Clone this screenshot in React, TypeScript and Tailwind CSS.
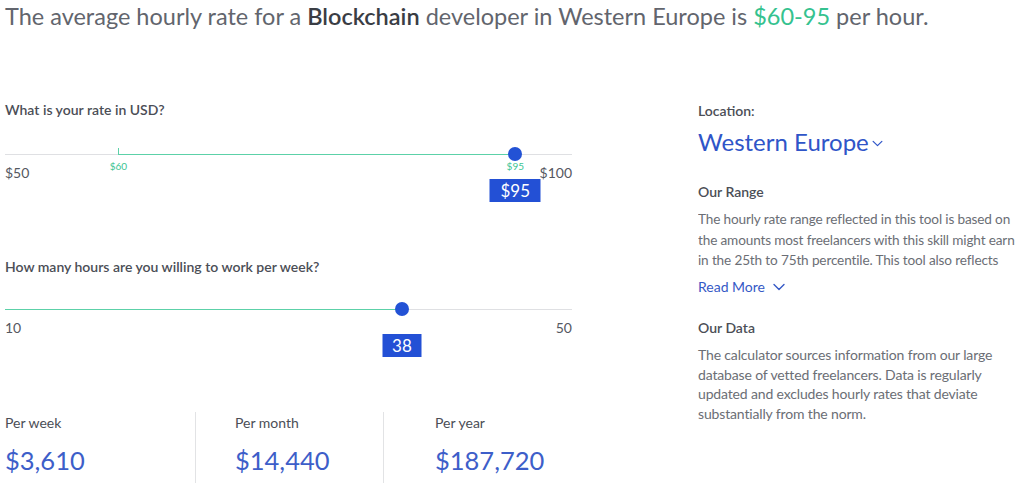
import type { ReactNode } from 'react'

const FONT = { fontFamily: 'Lato, "Open Sans", Arial, sans-serif' }

function pct(value: number, min: number, max: number) {
  return ((value - min) / (max - min)) * 100
}

function Chevron({ className }: { className: string }) {
  return (
    <svg viewBox="0 0 12 8" fill="none" className={className}>
      <path d="M1 1.5l5 5 5-5" stroke="currentColor" strokeWidth="1.4" strokeLinecap="round" strokeLinejoin="round" />
    </svg>
  )
}

function Label({ children }: { children: ReactNode }) {
  return <div className="text-[14px] leading-5 font-semibold text-[#4b4e56]">{children}</div>
}

interface SliderProps {
  min: number
  max: number
  value: number
  minLabel: string
  maxLabel: string
  badge: string
  badgeWidth: string
  range?: [number, number]
}

function Slider({ min, max, value, minLabel, maxLabel, badge, badgeWidth, range }: SliderProps) {
  const from = range ? pct(range[0], min, max) : 0
  const to = pct(value, min, max)
  return (
    <div className="flex flex-col">
      <div className="relative h-4">
        <div className="absolute left-0 right-0 top-[8px] h-px bg-[#dfe0e3]" />
        <div className="absolute top-[7.5px] h-[1.5px] bg-[#5cd1a8]" style={{ left: `${from}%`, width: `${to - from}%` }} />
        {range && (
          <>
            <div className="absolute top-[2px] h-[7px] w-px bg-[#5cd1a8]" style={{ left: `${from}%` }} />
            <div
              className="absolute top-[14px] -translate-x-1/2 text-[10px] leading-3 text-[#3cc493]"
              style={{ left: `${from}%` }}
            >
              ${range[0]}
            </div>
            <div
              className="absolute top-[14px] -translate-x-1/2 text-[10px] leading-3 text-[#3cc493]"
              style={{ left: `${pct(range[1], min, max)}%` }}
            >
              ${range[1]}
            </div>
          </>
        )}
        <div
          className="absolute top-[1px] h-[14px] w-[14px] -translate-x-1/2 rounded-full bg-[#2352d5]"
          style={{ left: `${to}%` }}
        />
      </div>
      <div className="flex justify-between pt-px text-[14px] leading-5 text-[#55585f]">
        <span>{minLabel}</span>
        <span>{maxLabel}</span>
      </div>
      <div className="relative -mt-[4px] h-[25px]">
        <div
          className={`absolute top-0 flex h-[23px] -translate-x-1/2 items-center justify-center bg-[#2350d5] text-[17px] text-white ${badgeWidth}`}
          style={{ left: `${to}%` }}
        >
          {badge}
        </div>
      </div>
    </div>
  )
}

function Stat({ label, value }: { label: string; value: string }) {
  return (
    <div className="flex flex-col gap-[9px] pt-px">
      <div className="text-[14px] leading-5 text-[#4b4e56]">{label}</div>
      <div className="text-[25.5px] leading-9 text-[#3d5ec9]">{value}</div>
    </div>
  )
}

export default function App() {
  return (
    <div className="h-[483px] w-[1024px] overflow-hidden bg-white px-[5px]" style={FONT}>
      <h1 className="text-[23.5px] leading-8 font-normal text-[#62656d] whitespace-nowrap">
        The average hourly rate for a <span className="font-semibold text-[#3a3d44]">Blockchain</span> developer in
        Western Europe is <span className="text-[#35c28f]">$60-95</span> per hour.
      </h1>

      <div className="flex items-start">
        <div className="flex w-[567px] shrink-0 flex-col pt-[68px]">
          <Label>What is your rate in USD?</Label>
          <div className="pt-[26px]">
            <Slider
              min={50}
              max={100}
              value={95}
              range={[60, 95]}
              minLabel="$50"
              maxLabel="$100"
              badge="$95"
              badgeWidth="w-[51px]"
            />
          </div>
          <div className="pt-[53px]">
            <Label>How many hours are you willing to work per week?</Label>
          </div>
          <div className="pt-[24px]">
            <Slider min={10} max={50} value={38} minLabel="10" maxLabel="50" badge="38" badgeWidth="w-[39px]" />
          </div>
          <div className="flex pt-[53px]">
            <div className="w-[190px] shrink-0">
              <Stat label="Per week" value="$3,610" />
            </div>
            <div className="w-[188px] shrink-0 border-l border-[#e2e3e5] pl-[39px]">
              <Stat label="Per month" value="$14,440" />
            </div>
            <div className="h-[80px] border-l border-[#e2e3e5] pl-[51px]">
              <Stat label="Per year" value="$187,720" />
            </div>
          </div>
        </div>

        <div className="ml-[126px] flex w-[326px] shrink-0 flex-col items-start pt-[69px]">
          <Label>Location:</Label>
          <button className="mt-[5px] flex items-center gap-[3px] text-[24px] leading-8 text-[#2f55c8]">
            Western Europe
            <Chevron className="mt-[3px] h-[7px] w-[11px]" />
          </button>
          <div className="mt-[24px]">
            <Label>Our Range</Label>
          </div>
          <p className="mt-[7px] h-[61.5px] overflow-hidden text-[13.6px] leading-[20.5px] tracking-[-0.15px] text-[#6b6e75]">
            The hourly rate range reflected in this tool is based on the amounts most freelancers with this skill might
            earn in the 25th to 75th percentile. This tool also reflects
          </p>
          <button className="mt-[6.5px] flex items-center gap-2 text-[14px] leading-5 text-[#3559c6]">
            Read More
            <Chevron className="h-[8px] w-[12px]" />
          </button>
          <div className="mt-[21px]">
            <Label>Our Data</Label>
          </div>
          <p className="mt-[7px] text-[14px] leading-[19.7px] tracking-[-0.15px] text-[#6b6e75]">
            The calculator sources information from our large database of vetted freelancers. Data is regularly
            updated and excludes hourly rates that deviate substantially from the norm.
          </p>
        </div>
      </div>
    </div>
  )
}
